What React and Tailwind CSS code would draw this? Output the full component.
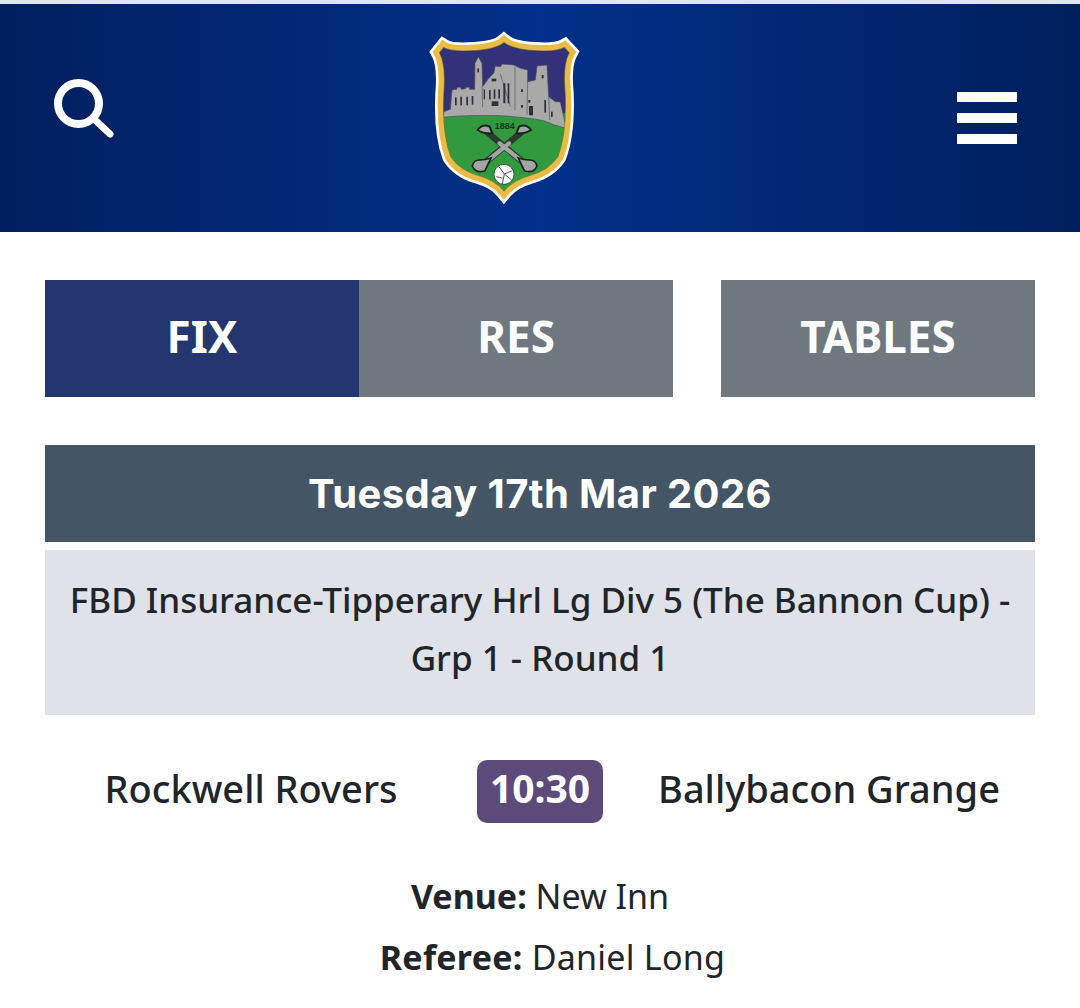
const shield =
  'M311 128 Q285 150 205 153 Q150 155 130 143 L118 158 Q138 195 131 280 Q125 400 152 470 Q178 510 235 526 Q285 540 311 572 Q338 540 388 526 Q445 510 472 470 Q499 400 494 280 Q486 195 506 158 L492 143 Q470 155 418 153 Q338 150 311 128 Z'

const Crest = () => (
  <svg viewBox="80 84 465 540" className="w-[155px] h-[180px] ml-[312px] shrink-0">
    <defs>
      <clipPath id="shield-inner">
        <path d={shield} />
      </clipPath>
    </defs>
    <path d={shield} fill="none" stroke="#ffffff" strokeWidth="52" strokeLinejoin="miter" strokeMiterlimit="6" />
    <path d={shield} fill="none" stroke="#e9bd45" strokeWidth="36" strokeLinejoin="miter" strokeMiterlimit="6" />
    <path d={shield} fill="none" stroke="#8a7a2e" strokeWidth="4" />
    <g clipPath="url(#shield-inner)">
      <rect x="100" y="110" width="420" height="240" fill="#32327a" />
      <rect x="100" y="340" width="420" height="250" fill="#319a3f" />
      <path d="M130 335 L150 328 L155 270 L170 268 L170 262 L182 262 L182 268 L196 266 L196 262 L208 262 L208 268 L223 268 L224 190 L234 170 L245 190 L247 260 L265 235 L280 220 L285 198 L300 200 L306 192 L340 195 L360 205 L382 210 L382 245 L405 240 L410 198 L440 195 L445 290 L465 305 L480 306 L498 385 Q460 376 430 362 Q380 352 300 347 Q200 344 130 352 Z" fill="#a9a9a9" stroke="#4c4d52" strokeWidth="2" />
      <path d="M245 262 L247 322 M300 222 L330 320 M344 200 L344 330 M382 245 L380 345 M445 290 L448 360" fill="none" stroke="#55565a" strokeWidth="2" />
      <g fill="#2f3036">
        <rect x="164" y="292" width="5" height="24" />
        <rect x="180" y="290" width="5" height="26" />
        <rect x="198" y="290" width="5" height="26" />
        <rect x="214" y="288" width="5" height="26" />
        <rect x="231" y="205" width="5" height="12" />
        <rect x="250" y="268" width="4" height="30" />
        <rect x="266" y="270" width="5" height="28" />
        <rect x="280" y="268" width="5" height="28" />
        <rect x="294" y="268" width="5" height="28" />
        <rect x="274" y="304" width="20" height="14" />
        <rect x="309" y="250" width="6" height="60" />
        <rect x="322" y="250" width="5" height="60" />
        <rect x="274" y="236" width="14" height="8" />
        <rect x="362" y="268" width="6" height="8" />
        <rect x="384" y="300" width="6" height="8" />
        <rect x="386" y="318" width="12" height="28" />
        <rect x="362" y="315" width="6" height="8" />
        <rect x="424" y="225" width="6" height="10" />
        <rect x="432" y="300" width="5" height="38" />
        <rect x="452" y="335" width="5" height="16" />
      </g>
      <text x="313" y="386" textAnchor="middle" fontSize="27" fontWeight="700" fill="#14351c" fontFamily="'Liberation Sans', sans-serif">1884</text>
      <g fill="none" strokeLinecap="round">
        <path d="M262 398 L382 498" stroke="#2b3a2e" strokeWidth="19" />
        <path d="M362 398 L242 498" stroke="#2b3a2e" strokeWidth="19" />
        <path d="M298 430 L382 498" stroke="#a3a4a4" strokeWidth="13" />
        <path d="M326 430 L242 498" stroke="#a3a4a4" strokeWidth="13" />
      </g>
      <path d="M232 390 Q246 370 268 380 L276 400 Q250 402 232 390 Z" fill="#a3a4a4" stroke="#14241a" strokeWidth="6" />
      <path d="M392 390 Q378 370 356 380 L348 400 Q374 402 392 390 Z" fill="#a3a4a4" stroke="#14241a" strokeWidth="6" />
      <path d="M216 498 Q220 480 238 480 Q256 480 272 474 L254 512 Q226 522 216 498 Z" fill="#a3a4a4" stroke="#14241a" strokeWidth="5" />
      <path d="M410 498 Q406 480 388 480 Q370 480 354 474 L372 512 Q400 522 410 498 Z" fill="#a3a4a4" stroke="#14241a" strokeWidth="5" />
      <circle cx="311" cy="523" r="30" fill="#ffffff" stroke="#14241a" strokeWidth="2" />
      <path d="M296 500 L312 522 L336 512 M312 522 L306 552 M312 522 L334 540 M288 530 L306 534" fill="none" stroke="#4b504e" strokeWidth="3" />
    </g>
  </svg>
)

const Tab = ({ label, active }) => (
  <div className={`h-[117px] w-[314px] pb-[6px] flex items-center justify-center text-white text-[44px] font-bold ${active ? 'bg-[#233670]' : 'bg-[#6f787f]'}`}>
    {label}
  </div>
)

const App = () => {
  return (
    <div className="w-[1080px] h-[1008px] bg-white overflow-hidden text-[#212529] font-['Noto_Sans',sans-serif]">
      <div className="h-1 bg-[#dfe6f2]" />
      <header className="h-[228px] flex items-center pl-[53px] pr-[63px] bg-linear-to-r from-[#011f5e] via-[#02308a] to-[#001f5c]">
        <svg viewBox="0 0 62 62" className="w-[62px] h-[62px] shrink-0 -mt-[18px]" fill="none" stroke="#ffffff" strokeLinecap="round">
          <circle cx="25.5" cy="25.5" r="20.5" strokeWidth="8" />
          <path d="M41 41 L57 56" strokeWidth="7" />
        </svg>
        <Crest />
        <div className="ml-auto w-[60px] flex flex-col gap-[11px]">
          <div className="h-[10px] bg-white" />
          <div className="h-[10px] bg-white" />
          <div className="h-[10px] bg-white" />
        </div>
      </header>

      <main className="px-[45px] pt-[48px]">
        <div className="flex">
          <Tab label="FIX" active />
          <Tab label="RES" />
          <div className="ml-auto">
            <Tab label="TABLES" />
          </div>
        </div>

        <div className="mt-[48px] h-[97px] flex items-center justify-center bg-[#445665] text-white text-[40px] font-bold font-['Inter',sans-serif] tracking-[0.4px]">
          Tuesday 17th Mar 2026
        </div>
        <div className="mt-2 h-[165px] pb-2 flex items-center justify-center text-center bg-[#dfe2e8] text-[35px] leading-[58px] font-medium px-4">
          <span>
            FBD Insurance-Tipperary Hrl Lg Div 5 (The Bannon Cup) -
            <br />
            Grp 1 - Round 1
          </span>
        </div>

        <div className="mt-[45px] h-[63px] flex items-center text-[38px] font-medium">
          <div className="w-[412px] pb-[6px] text-center">Rockwell Rovers</div>
          <div className="w-[126px] h-[63px] pb-[6px] mx-5 flex items-center justify-center rounded-[10px] bg-[#5c4a7b] text-white font-bold text-[39px]">
            10:30
          </div>
          <div className="w-[412px] pb-[6px] text-center">Ballybacon Grange</div>
        </div>

        <div className="mt-[43px] text-center text-[34px] leading-[61px]">
          <div>
            <span className="font-bold">Venue:</span> New Inn
          </div>
          <div className="pl-[25px] tracking-[0.25px]">
            <span className="font-bold">Referee:</span> Daniel Long
          </div>
        </div>
      </main>
    </div>
  )
}

export default App
